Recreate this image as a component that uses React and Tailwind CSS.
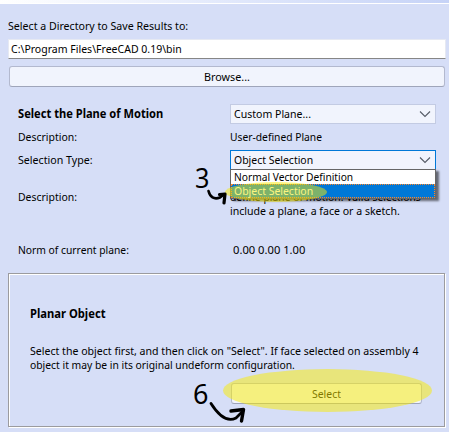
import React, { useLayoutEffect, useRef } from 'react';

// Condenses a line of text so that it fills the given width.
function Fit({ w, className = '', children }) {
  const ref = useRef(null);
  useLayoutEffect(() => {
    const el = ref.current;
    el.style.transform = `scaleX(${w / el.offsetWidth})`;
    el.style.marginRight = `${w - el.offsetWidth}px`;
  }, [w]);
  return (
    <span ref={ref} className={`inline-block shrink-0 origin-left ${className}`}>
      {children}
    </span>
  );
}

function Chevron() {
  return (
    <svg className="mr-[4px] shrink-0" width="12" height="8" viewBox="0 0 12 8" fill="none" stroke="#555b66" strokeWidth="1.1">
      <path d="M1 1.5L6 6.5L11 1.5" />
    </svg>
  );
}

function Row({ label, className, children }) {
  return (
    <div className={`flex items-center pl-[10px] ${className}`}>
      <div className="w-[212px] shrink-0">{label}</div>
      {children}
    </div>
  );
}

export default function App() {
  return (
    <div className="relative h-[432px] w-[449px] overflow-hidden bg-[#d6def7] font-['Noto_Sans','Open_Sans',sans-serif] text-[11.5px] leading-[14px] whitespace-nowrap text-black">
      <div className="h-[4px] border-b border-white bg-linear-to-r from-white to-[#c6d3f7]" />
      <div className="flex flex-col pl-[8px]">
        <div className="mt-[15px] h-[14px]"><Fit w={180}>Select a Directory to Save Results to:</Fit></div>
        <div className="mt-[6px] flex h-[20px] w-[438px] items-center border border-[#e6e9f2] border-b-[#868686] bg-white pl-[2px]">
          <Fit w={171}>C:\Program Files\FreeCAD 0.19\bin</Fit>
        </div>
        <div className="mt-[7px] ml-px flex h-[21px] w-[436px] items-center justify-center rounded-[3px] border border-[#b3b9cf] border-b-[#9fa5ba] bg-[#f1f4fd]">
          <Fit w={46}>Browse...</Fit>
        </div>

        <Row className="mt-[17px] h-[20px]" label={<Fit w={145} className="font-bold">Select the Plane of Motion</Fit>}>
          <div className="flex h-[20px] w-[206px] items-center justify-between border border-[#c3cbe3] bg-[#f1f4fd] pl-[3px]">
            <Fit w={77}>Custom Plane...</Fit>
            <Chevron />
          </div>
        </Row>
        <Row className="mt-[6px] h-[14px]" label={<Fit w={59}>Description:</Fit>}>
          <Fit w={92}>User-defined Plane</Fit>
        </Row>
        <Row className="mt-[6px] h-[20px]" label={<Fit w={75}>Selection Type:</Fit>}>
          <div className="relative h-[20px] w-[206px]">
            <div className="flex h-[20px] items-center justify-between border border-[#0078d7] bg-[#f1f4fd] pl-[3px]">
              <Fit w={79}>Object Selection</Fit>
              <Chevron />
            </div>
            <div className="absolute top-[19px] left-0 z-10 w-[206px] border border-[#666] bg-white shadow-[3px_2px_2px_#0008]">
              <div className="flex h-[14px] items-center pl-[3px]"><Fit w={119}>Normal Vector Definition</Fit></div>
              <div className="flex h-[14px] items-center border border-dotted border-[#ff8728] bg-[#0078d7] pl-[2px] text-white"><Fit w={79}>Object Selection</Fit></div>
            </div>
          </div>
        </Row>
        <div className="mt-[20px] flex h-[28px] pl-[10px]">
          <div className="w-[212px]"><Fit w={59}>Description:</Fit></div>
          <div>
            <div className="h-[14px]"><Fit w={191}>define plane of motion. Valid selections</Fit></div>
            <div className="h-[14px]"><Fit w={170}>include a plane, a face or a sketch.</Fit></div>
          </div>
        </div>
        <Row className="mt-[25px] h-[14px]" label={<Fit w={111}>Norm of current plane:</Fit>}>
          <Fit w={72} className="ml-[3px]">0.00 0.00 1.00</Fit>
        </Row>

        <div className="mt-[16px] h-[154px] w-[437px] border border-[#9b9b9f] shadow-[inset_1px_1px_0_white,1px_1px_0_white]">
          <div className="mt-[33px] ml-[21px] h-[14px] font-bold"><Fit w={76}>Planar Object</Fit></div>
          <div className="mt-[23px] ml-[21px] h-[28px]">
            <div className="h-[14px]"><Fit w={389}>Select the object first, and then click on "Select". If face selected on assembly 4</Fit></div>
            <div className="h-[14px]"><Fit w={265}>object it may be in its original undeform configuration.</Fit></div>
          </div>
          <div className="mt-[11px] ml-[222px] flex h-[21px] w-[191px] items-center justify-center rounded-[3px] border border-[#b3b9cf] border-b-[#9fa5ba] bg-[#f1f4fd]">
            <Fit w={29}>Select</Fit>
          </div>
        </div>
      </div>

      <div className="absolute top-[182px] left-[225px] z-20 h-[20px] w-[102px] rounded-[50%] bg-[#faec00]/50" />
      <div className="absolute top-[369px] left-[223px] z-20 h-[43px] w-[209px] rounded-[50%] bg-[#faec00]/50" />
      <div className="absolute top-[162px] left-[195px] z-20 text-[27px] leading-[32px]"><Fit w={14}>3</Fit></div>
      <div className="absolute top-[378px] left-[193px] z-20 text-[27px] leading-[32px]"><Fit w={15}>6</Fit></div>
      <svg className="absolute top-0 left-0 z-20" width="449" height="432" fill="none" stroke="black" strokeLinecap="round" strokeLinejoin="round">
        <path strokeWidth="2.6" d="M208.500 191C210 197 214 200 220 197.500L224 194.500" />
        <path strokeWidth="3.200" d="M219.500 194.500L225 194L224 203" />
        <path strokeWidth="2.800" d="M211 403.500C217 413 226 423 236 418L243 411" />
        <path strokeWidth="3.400" d="M231 411L243.500 409.500L241.500 421" />
      </svg>
    </div>
  );
}
